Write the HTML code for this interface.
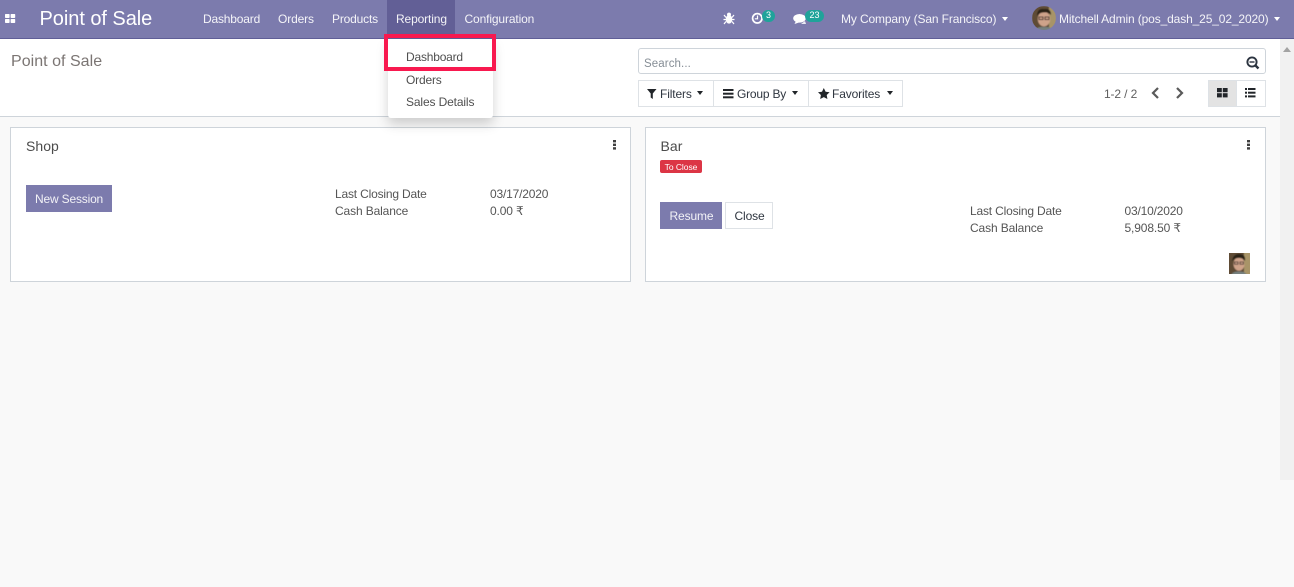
<!DOCTYPE html>
<html><head><meta charset="utf-8"><style>
html,body{margin:0;padding:0;width:1294px;height:587px;overflow:hidden;background:#f9f9f9;font-family:"Liberation Sans",sans-serif;font-size:12px;color:#4c4c4c}
.a{position:absolute;white-space:nowrap;line-height:16px;letter-spacing:-.13px}
.box{position:absolute;box-sizing:border-box}
.n{color:#fff;opacity:.92;top:11px}
.car{position:absolute;width:0;height:0;border-left:3.5px solid transparent;border-right:3.5px solid transparent;border-top:4px solid currentColor}
.d{color:#555}
svg{position:absolute;overflow:visible}
</style></head><body>
<div class="box" style="left:0;top:0;width:1294px;height:39px;background:#7c7bad;border-bottom:1px solid #5f5e97"></div>
<div class="box" style="left:387px;top:0;width:68px;height:38px;background:#625f96"></div>
<svg style="left:5px;top:14px" width="11" height="10" fill="#fff"><rect x="0" y="0" width="4.6" height="4" rx=".7"/><rect x="5.6" y="0" width="4.6" height="4" rx=".7"/><rect x="0" y="5" width="4.6" height="4" rx=".7"/><rect x="5.6" y="5" width="4.6" height="4" rx=".7"/></svg>
<div class="a" style="left:39.500px;top:8px;font-size:20px;line-height:22px;color:#fff;letter-spacing:-.05px">Point of Sale</div>
<div class="a n" style="left:203px;letter-spacing:-.18px">Dashboard</div>
<div class="a n" style="left:278px">Orders</div>
<div class="a n" style="left:332px;letter-spacing:-.18px">Products</div>
<div class="a n" style="left:396px">Reporting</div>
<div class="a n" style="left:464.500px">Configuration</div>
<svg style="left:723px;top:12px" width="12" height="12" fill="#fff"><ellipse cx="6" cy="7.300" rx="3.300" ry="4.300"/><circle cx="6" cy="2.600" r="2"/><path d="M1 3L3 5.500M11 3L9 5.500M.5 7.500H3M11.500 7.500H9M1 12L3 9.500M11 12L9 9.500" stroke="#fff" stroke-width="1.200"/></svg>
<svg style="left:752px;top:13px" width="11" height="11" fill="none" stroke="#fff"><circle cx="5.300" cy="5.300" r="4.700" stroke-width="1.700"/><path d="M5.500 2.500V5.800H2.800" stroke-width="1.200"/></svg>
<div class="box" style="left:762px;top:10px;width:13px;height:12px;border-radius:6px;background:#1fa39a;color:#fff;font-size:9px;line-height:11px;text-align:center">3</div>
<svg style="left:793px;top:14px" width="14" height="10" fill="#fff"><ellipse cx="6.500" cy="4.300" rx="6.300" ry="4.300"/><path d="M3 7L1.500 10 6 8.500z"/><path d="M8 10L13 10 12 7z" opacity=".85"/></svg>
<div class="box" style="left:805px;top:10px;width:19px;height:12px;border-radius:6px;background:#1fa39a;color:#fff;font-size:9px;line-height:11px;text-align:center">23</div>
<div class="a n" style="left:841px">My Company (San Francisco)</div>
<div class="car" style="left:1002px;top:17px;color:#fff"></div>
<svg style="left:1032px;top:6px" width="24" height="24"><defs><clipPath id="c1"><circle cx="12" cy="12" r="12"/></clipPath><filter id="b"><feGaussianBlur stdDeviation=".5"/></filter></defs><g clip-path="url(#c1)"><g filter="url(#b)"><rect width="24" height="24" fill="#5f4c36"/><rect x="17" width="7" height="24" fill="#a89468"/><ellipse cx="12" cy="13" rx="6.200" ry="7.500" fill="#cfa38a"/><path d="M5 10Q5 2 12 3 19 2 19 9 16 6 12 6.500 8 6 5 10z" fill="#2b2019"/><rect x="7" y="11" width="4" height="2.500" fill="none" stroke="#3a2f2a"/><rect x="13" y="11" width="4" height="2.500" fill="none" stroke="#3a2f2a"/><path d="M3 25Q5 20 12 21 19 20 21 25z" fill="#76807e"/></g></g></svg>
<div class="a n" style="left:1059px">Mitchell Admin (pos_dash_25_02_2020)</div>
<div class="car" style="left:1274px;top:17px;color:#fff"></div>

<div class="box" style="left:0;top:39px;width:1280px;height:78px;background:#fff;border-bottom:1px solid #ced4da"></div>
<div class="box" style="left:1280px;top:39px;width:14px;height:441px;background:#f1f1f1"></div>
<div class="box" style="left:1283px;top:47px;width:0;height:0;border-left:4px solid transparent;border-right:4px solid transparent;border-bottom:5px solid #a3a3a3"></div>
<div class="a" style="left:11px;top:52px;font-size:16px;line-height:19px;color:#7b7573;letter-spacing:.03px">Point of Sale</div>

<div class="box" style="left:638px;top:48px;width:628px;height:26px;background:#fff;border:1px solid #ced4da;border-radius:3px"></div>
<div class="a" style="left:644px;top:56px;font-size:11.500px;color:#868e96;letter-spacing:.1px">Search...</div>
<svg style="left:1246px;top:56px" width="14" height="14" fill="none" stroke="#2c3440" stroke-width="1.900"><circle cx="6" cy="6" r="4.600"/><path d="M9.500 9.500L12.500 12.500" stroke-width="2.400"/><path d="M3.500 6H8.500" stroke-width="1.400"/></svg>

<div class="box" style="left:638px;top:80px;width:76px;height:27px;background:#fff;border:1px solid #dee2e6"></div>
<div class="box" style="left:714px;top:80px;width:95px;height:27px;background:#fff;border:1px solid #dee2e6;border-left:0"></div>
<div class="box" style="left:809px;top:80px;width:94px;height:27px;background:#fff;border:1px solid #dee2e6;border-left:0"></div>
<svg style="left:647px;top:89px" width="10" height="10" fill="#212529"><path d="M0 0H9.500L5.800 4.500V10L3.700 8.500V4.500z"/></svg>
<div class="a" style="left:660px;top:86px;color:#2f3640">Filters</div>
<div class="car" style="left:697px;top:91px;color:#212529"></div>
<svg style="left:723px;top:89px" width="11" height="10" fill="#212529"><rect y="0" width="10.500" height="2"/><rect y="3.700" width="10.500" height="2"/><rect y="7.300" width="10.500" height="2"/></svg>
<div class="a" style="left:737px;top:86px;color:#2f3640;letter-spacing:-.2px">Group By</div>
<div class="car" style="left:792px;top:91px;color:#212529"></div>
<svg style="left:818px;top:88px" width="12" height="11" fill="#212529"><path d="M5.800 0L7.600 3.700 11.600 4.200 8.700 7 9.400 11 5.800 9.100 2.200 11 2.900 7 0 4.200 4 3.700z"/></svg>
<div class="a" style="left:832px;top:86px;color:#2f3640">Favorites</div>
<div class="car" style="left:887px;top:91px;color:#212529"></div>

<div class="a" style="left:1104px;top:86px;color:#5f5f5f">1-2 / 2</div>
<svg style="left:1151px;top:87px" width="9" height="12" fill="none" stroke="#5a5a5a" stroke-width="2.200"><path d="M7 1L2 6 7 11"/></svg>
<svg style="left:1175px;top:87px" width="9" height="12" fill="none" stroke="#5a5a5a" stroke-width="2.200"><path d="M2 1L7 6 2 11"/></svg>
<div class="box" style="left:1208px;top:80px;width:29px;height:27px;background:#e3e3e3;border:1px solid #dee2e6"></div>
<div class="box" style="left:1237px;top:80px;width:29px;height:27px;background:#fff;border:1px solid #dee2e6;border-left:0"></div>
<svg style="left:1217px;top:88px" width="11" height="10" fill="#212529"><rect width="4.800" height="4.200"/><rect x="5.800" width="4.800" height="4.200"/><rect y="5.200" width="4.800" height="4.200"/><rect x="5.800" y="5.200" width="4.800" height="4.200"/></svg>
<svg style="left:1245px;top:88px" width="12" height="10" fill="#212529"><rect width="2" height="2"/><rect y="3.700" width="2" height="2"/><rect y="7.400" width="2" height="2"/><rect x="3" width="7.500" height="2"/><rect x="3" y="3.700" width="7.500" height="2"/><rect x="3" y="7.400" width="7.500" height="2"/></svg>

<div class="box" style="left:10px;top:127px;width:621px;height:155px;background:#fff;border:1px solid #ced4da"></div>
<div class="a" style="left:26px;top:137px;font-size:14px;line-height:18px;color:#4c4c4c;letter-spacing:.05px">Shop</div>
<svg style="left:613px;top:140px" width="3" height="10" fill="#3f3f3f"><rect width="3" height="2.400"/><rect y="3.600" width="3" height="2.400"/><rect y="7.200" width="3" height="2.400"/></svg>
<div class="box" style="left:26px;top:185px;width:86px;height:27px;background:#7c7bad"></div>
<div class="a" style="left:35px;top:191px;color:#fff;opacity:.9;letter-spacing:-.18px">New Session</div>
<div class="a d" style="left:335px;top:186px;letter-spacing:-.18px">Last Closing Date</div>
<div class="a d" style="left:490px;top:186px;letter-spacing:-.18px">03/17/2020</div>
<div class="a d" style="left:335px;top:203px">Cash Balance</div>
<div class="a d" style="left:490px;top:203px">0.00 ₹</div>

<div class="box" style="left:645px;top:127px;width:621px;height:155px;background:#fff;border:1px solid #ced4da"></div>
<div class="a" style="left:660.500px;top:137px;font-size:14px;line-height:18px;color:#4c4c4c;letter-spacing:.05px">Bar</div>
<div class="box" style="left:660px;top:160px;width:42px;height:13px;background:#dc3545;border-radius:2px;color:#fff;font-size:8.500px;line-height:14px;text-align:center;letter-spacing:-.05px">To Close</div>
<svg style="left:1247px;top:140px" width="3" height="10" fill="#3f3f3f"><rect width="3" height="2.400"/><rect y="3.600" width="3" height="2.400"/><rect y="7.200" width="3" height="2.400"/></svg>
<div class="box" style="left:660px;top:202px;width:62px;height:27px;background:#7c7bad"></div>
<div class="a" style="left:669.500px;top:208px;color:#fff;opacity:.9">Resume</div>
<div class="box" style="left:725px;top:202px;width:48px;height:27px;background:#fff;border:1px solid #dee2e6"></div>
<div class="a" style="left:734.500px;top:208px;color:#2f3640">Close</div>
<div class="a d" style="left:970px;top:203px;letter-spacing:-.18px">Last Closing Date</div>
<div class="a d" style="left:1124.500px;top:203px;letter-spacing:-.18px">03/10/2020</div>
<div class="a d" style="left:970px;top:220px">Cash Balance</div>
<div class="a d" style="left:1124.500px;top:220px">5,908.50 ₹</div>
<svg style="left:1229px;top:253px" width="21" height="21"><defs><clipPath id="c2"><rect width="21" height="21"/></clipPath></defs><g clip-path="url(#c2)"><g filter="url(#b)"><rect x="-2" y="-2" width="25" height="25" fill="#5f4c36"/><rect x="15" y="-2" width="8" height="25" fill="#a89468"/><ellipse cx="10" cy="11" rx="5.500" ry="6.800" fill="#cfa38a"/><path d="M3 8Q4 1 10 1 17 1 16 8 14 4.500 10 5 6 4.500 3 8z" fill="#2b2019"/><rect x="5.500" y="9" width="3.500" height="2.200" fill="none" stroke="#3a2f2a" stroke-width=".8"/><rect x="11" y="9" width="3.500" height="2.200" fill="none" stroke="#3a2f2a" stroke-width=".8"/><path d="M2 22Q4 18 10 18.500 16 18 18 22z" fill="#76807e"/></g></g></svg>

<div class="box" style="left:388px;top:39px;width:105px;height:79px;background:#fff;border-radius:0 0 3px 3px;box-shadow:0 6px 12px rgba(0,0,0,.18)"></div>
<div class="a" style="left:406px;top:49px;color:#4f4f4f;letter-spacing:-.2px">Dashboard</div>
<div class="a" style="left:406px;top:72px;color:#4f4f4f;letter-spacing:-.18px">Orders</div>
<div class="a" style="left:406px;top:94px;color:#4f4f4f">Sales Details</div>
<div class="box" style="left:384px;top:34px;width:112px;height:37px;border:4px solid #f8194f"></div>
</body></html>
